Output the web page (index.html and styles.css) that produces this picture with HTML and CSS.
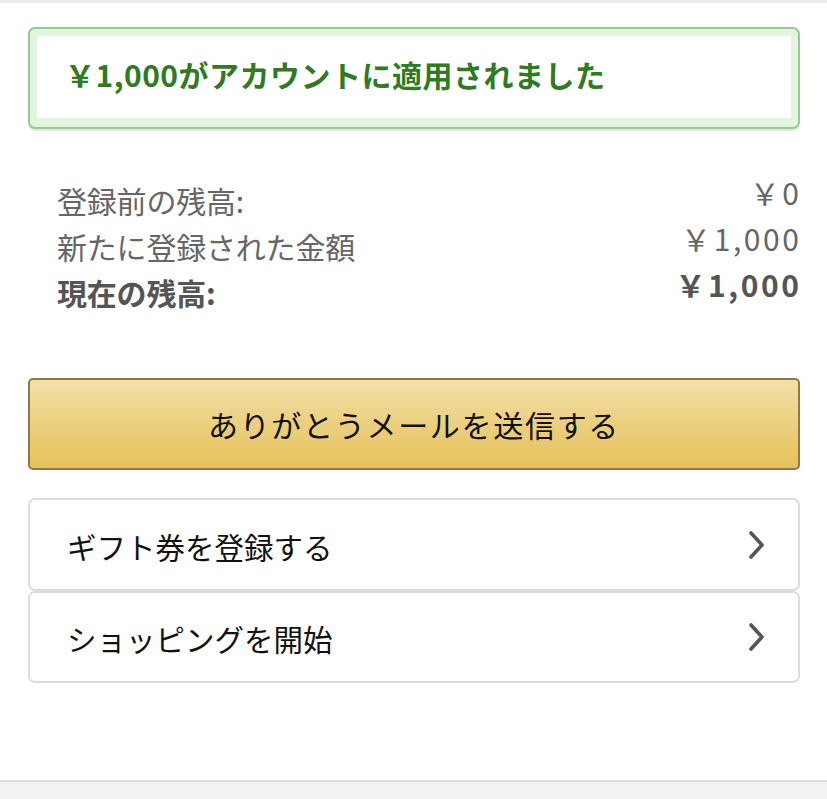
FILE: index.html
```html
<!DOCTYPE html>
<html lang="ja">
<head>
<meta charset="utf-8">
<title>ギフト券の登録</title>
<link rel="stylesheet" href="styles.css">
</head>
<body>
<div class="topbar"></div>
<main class="main">
  <div class="alert">
    <div class="alert-inner">
      <h4 class="alert-text">￥1,000がアカウントに適用されました</h4>
    </div>
  </div>

  <div class="balances">
    <div class="row">
      <span class="label">登録前の残高:</span>
      <span class="value">￥0</span>
    </div>
    <div class="row">
      <span class="label">新たに登録された金額</span>
      <span class="value">￥1,000</span>
    </div>
    <div class="row row-total">
      <span class="label">現在の残高:</span>
      <span class="value">￥1,000</span>
    </div>
  </div>

  <button class="btn-primary" type="button">ありがとうメールを送信する</button>

  <div class="links">
    <a class="link-item" href="#">
      <span class="link-text">ギフト券を登録する</span>
      <svg class="chev" width="18" height="28" viewBox="0 0 18 28" aria-hidden="true"><path d="M3 2 L14 14 L3 26" fill="none" stroke="#555" stroke-width="3.6" stroke-linecap="round" stroke-linejoin="round"/></svg>
    </a>
    <a class="link-item" href="#">
      <span class="link-text">ショッピングを開始</span>
      <svg class="chev" width="18" height="28" viewBox="0 0 18 28" aria-hidden="true"><path d="M3 2 L14 14 L3 26" fill="none" stroke="#555" stroke-width="3.6" stroke-linecap="round" stroke-linejoin="round"/></svg>
    </a>
  </div>
</main>
<footer class="footer"></footer>
</body>
</html>
```

FILE: styles.css
```css
* { box-sizing: border-box; }

html, body {
  margin: 0;
  padding: 0;
  background: #fff;
}

body {
  font-family: "Noto Sans CJK JP", "Noto Sans", sans-serif;
  color: #111;
  width: 827px;
  height: 799px;
  overflow: hidden;
  display: flex;
  flex-direction: column;
}

.topbar {
  height: 3px;
  background: #ececec;
  flex: none;
}

.main {
  flex: 1;
  padding: 24px 27px 0 28px;
}

.alert {
  height: 102px;
  border: 2px solid #98c992;
  border-radius: 7px;
  background: #e3f5de;
  padding: 7px 7px 9px 7px;
  box-shadow: 0 3px 0 -1px #e6e6e6;
}

.alert-inner {
  height: 100%;
  background: #fff;
  display: flex;
  align-items: center;
  padding-left: 28px;
}

.alert-text {
  margin: 0;
  font-size: 30px;
  font-weight: 700;
  color: #2f7a22;
  letter-spacing: 0.5px;
  line-height: 1;
  position: relative;
  top: -3px;
}

.balances {
  margin-top: 48px;
  padding: 0 1px 0 29px;
}

.row {
  display: flex;
  justify-content: space-between;
  align-items: flex-start;
  font-size: 30px;
  color: #666;
  height: 46px;
}

.label {
  line-height: 46px;
  letter-spacing: -0.2px;
}

.value {
  line-height: 30px;
  letter-spacing: 2.6px;
  margin-right: -2.6px;
}

.row-total {
  font-weight: 700;
  color: #555;
}

.btn-primary {
  display: block;
  width: 100%;
  margin-top: 63px;
  height: 92px;
  border: 2px solid #927a3f;
  border-radius: 5px;
  background: linear-gradient(to bottom, #f4e0a8 0%, #eccf7f 50%, #e7c25c 100%);
  font-family: inherit;
  font-size: 30px;
  letter-spacing: 1.7px;
  color: #111;
  padding: 0;
  cursor: pointer;
}

.links {
  margin-top: 28px;
  display: flex;
  flex-direction: column;
}

.link-item {
  display: flex;
  align-items: center;
  justify-content: space-between;
  height: 93px;
  border: 2px solid #dcdcdc;
  border-radius: 7px;
  padding: 0 32px 0 37px;
  text-decoration: none;
  color: #111;
  font-size: 29.5px;
}

.link-item + .link-item {
  height: 92px;
}

.link-text {
  line-height: 1;
  position: relative;
  top: 2px;
}

.chev {
  display: block;
}

.footer {
  flex: none;
  height: 19px;
  background: #f2f2f2;
  border-top: 2px solid #dedede;
}
```
